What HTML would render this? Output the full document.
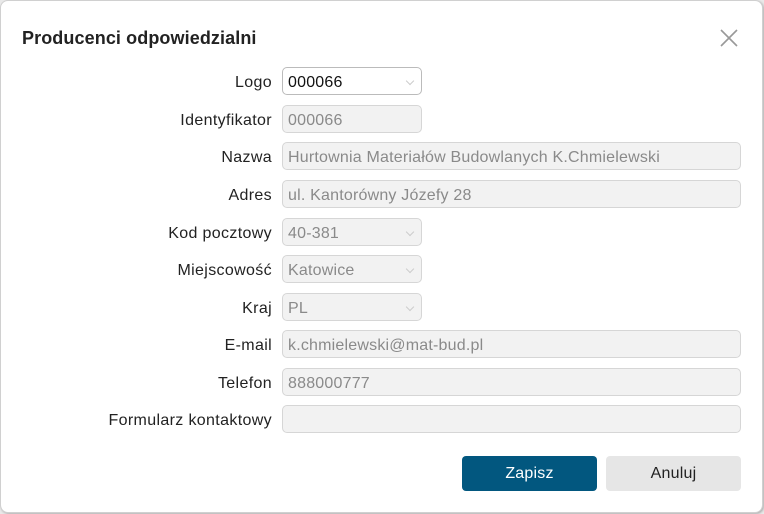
<!DOCTYPE html>
<html><head><style>
html,body{margin:0;padding:0;width:764px;height:514px;background:#e9e9e9;overflow:hidden;font-family:"Liberation Sans",Arial,sans-serif}
.dlg{position:absolute;left:0;top:0;width:761px;height:511px;background:#fff;border:1px solid #d0d0d0;border-radius:8px;box-shadow:1px 1px 2px rgba(0,0,0,.25)}
.title{position:absolute;left:21px;top:27px;font-size:18px;font-weight:bold;color:#222;letter-spacing:0.1px}
.close{position:absolute;left:718px;top:27px}
.lbl{position:absolute;right:492px;font-size:16px;color:#222;text-align:right;white-space:nowrap;letter-spacing:0.35px;margin-top:1px}
.in{position:absolute;left:282px;height:28px;box-sizing:border-box;border:1px solid #d6d6d6;border-radius:5px;background:#f2f2f2;color:#8a8a8a;font-size:16px;line-height:28px;padding-left:5px;white-space:nowrap;letter-spacing:0.2px}
.in span.t{position:relative;top:1px}
.n{width:140px}.w{width:459px}
.act{background:#fff;border-color:#bbb;color:#111}
.ch{position:absolute;right:8px;top:10px;width:5px;height:5px;border-right:1px solid #ccc;border-bottom:1px solid #ccc;transform:rotate(45deg)}
.btn{position:absolute;top:456px;height:35px;width:135px;border-radius:4px;text-align:center;line-height:35px;font-size:16px;letter-spacing:0.2px}
</style></head><body>
<div class="dlg">
<div class="title">Producenci odpowiedzialni</div>
<svg class="close" width="20" height="20" viewBox="0 0 20 20"><path d="M2 2L18 18M18 2L2 18" stroke="#999" stroke-width="1.6"/></svg>
</div>
<div class="lbl" style="top:73px">Logo</div><div class="in n act" style="top:67px"><span class="t">000066</span><span class="ch"></span></div>
<div class="lbl" style="top:111px">Identyfikator</div><div class="in n" style="top:105px"><span class="t">000066</span></div>
<div class="lbl" style="top:148px">Nazwa</div><div class="in w" style="top:142px"><span class="t">Hurtownia Materiałów Budowlanych K.Chmielewski</span></div>
<div class="lbl" style="top:186px">Adres</div><div class="in w" style="top:180px"><span class="t">ul. Kantorówny Józefy 28</span></div>
<div class="lbl" style="top:224px">Kod pocztowy</div><div class="in n" style="top:218px"><span class="t">40-381</span><span class="ch"></span></div>
<div class="lbl" style="top:261px">Miejscowość</div><div class="in n" style="top:255px"><span class="t">Katowice</span><span class="ch"></span></div>
<div class="lbl" style="top:299px">Kraj</div><div class="in n" style="top:293px"><span class="t">PL</span><span class="ch"></span></div>
<div class="lbl" style="top:336px">E-mail</div><div class="in w" style="top:330px"><span class="t">k.chmielewski@mat-bud.pl</span></div>
<div class="lbl" style="top:374px">Telefon</div><div class="in w" style="top:368px"><span class="t">888000777</span></div>
<div class="lbl" style="top:411px">Formularz kontaktowy</div><div class="in w" style="top:405px"></div>
<div class="btn" style="left:462px;background:#02577f;color:#fff">Zapisz</div>
<div class="btn" style="left:606px;background:#e6e6e6;color:#222">Anuluj</div>
</body></html>
